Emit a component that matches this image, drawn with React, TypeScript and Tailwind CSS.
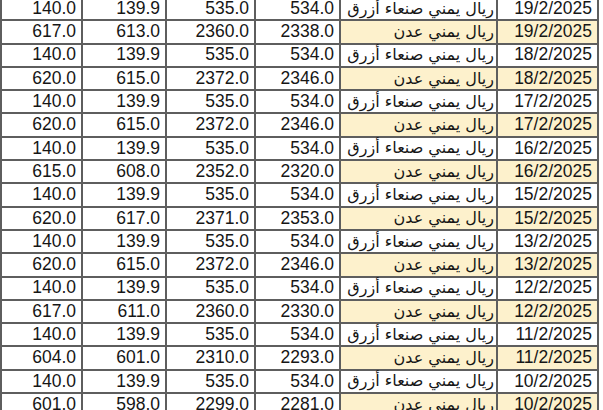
const rows: [string, string, string, string, 'sanaa' | 'aden', string][] = [
  ['140.0', '139.9', '535.0', '534.0', 'sanaa', '19/2/2025'],
  ['617.0', '613.0', '2360.0', '2338.0', 'aden', '19/2/2025'],
  ['140.0', '139.9', '535.0', '534.0', 'sanaa', '18/2/2025'],
  ['620.0', '615.0', '2372.0', '2346.0', 'aden', '18/2/2025'],
  ['140.0', '139.9', '535.0', '534.0', 'sanaa', '17/2/2025'],
  ['620.0', '615.0', '2372.0', '2346.0', 'aden', '17/2/2025'],
  ['140.0', '139.9', '535.0', '534.0', 'sanaa', '16/2/2025'],
  ['615.0', '608.0', '2352.0', '2320.0', 'aden', '16/2/2025'],
  ['140.0', '139.9', '535.0', '534.0', 'sanaa', '15/2/2025'],
  ['620.0', '617.0', '2371.0', '2353.0', 'aden', '15/2/2025'],
  ['140.0', '139.9', '535.0', '534.0', 'sanaa', '13/2/2025'],
  ['620.0', '615.0', '2372.0', '2346.0', 'aden', '13/2/2025'],
  ['140.0', '139.9', '535.0', '534.0', 'sanaa', '12/2/2025'],
  ['617.0', '611.0', '2360.0', '2330.0', 'aden', '12/2/2025'],
  ['140.0', '139.9', '535.0', '534.0', 'sanaa', '11/2/2025'],
  ['604.0', '601.0', '2310.0', '2293.0', 'aden', '11/2/2025'],
  ['140.0', '139.9', '535.0', '534.0', 'sanaa', '10/2/2025'],
  ['601.0', '598.0', '2299.0', '2281.0', 'aden', '10/2/2025'],
]

const currencyName = {
  sanaa: 'ريال يمني صنعاء أزرق',
  aden: 'ريال يمني عدن',
}

const numCell = 'border-2 border-[#5e5e5e] pr-[5px] text-right align-middle'

export default function App() {
  return (
    <div className="h-[410px] w-[603px] overflow-hidden bg-white font-['Liberation_Sans','DejaVu_Sans',sans-serif] text-[#161616]">
      <table className="-mt-[4px] w-[598px] table-fixed border-collapse text-[17.5px] leading-none">
        <colgroup>
          <col className="w-[81px]" />
          <col className="w-[84px]" />
          <col className="w-[89px]" />
          <col className="w-[85px]" />
          <col className="w-[157px]" />
          <col className="w-[101px]" />
        </colgroup>
        <tbody>
          {rows.map(([a, b, c, d, kind, date], i) => {
            const hl = kind === 'aden' ? 'bg-[#fdf1cc]' : 'bg-white'
            return (
              <tr key={i} className="h-[23.3px]">
                <td className={numCell}>{a}</td>
                <td className={numCell}>{b}</td>
                <td className={numCell}>{c}</td>
                <td className={numCell}>{d}</td>
                <td
                  dir="rtl"
                  className={`border-2 border-[#5e5e5e] pr-[2px] text-right align-middle text-[16px] font-['DejaVu_Sans',sans-serif] ${hl}`}
                >
                  {currencyName[kind]}
                </td>
                <td className={`${numCell} pr-[4px] ${hl}`}>{date}</td>
              </tr>
            )
          })}
        </tbody>
      </table>
    </div>
  )
}
